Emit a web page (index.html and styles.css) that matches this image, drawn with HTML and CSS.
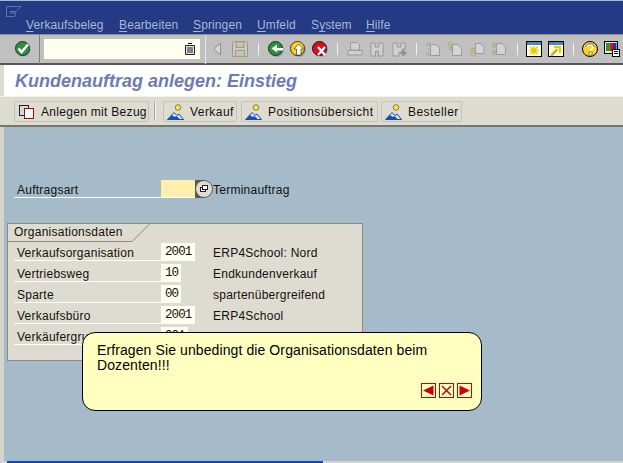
FILE: index.html
```html
<!DOCTYPE html>
<html lang="de">
<head>
<meta charset="utf-8">
<title>Kundenauftrag anlegen: Einstieg</title>
<link rel="stylesheet" href="styles.css">
</head>
<body>
<div class="window">
  <header class="menubar">
    <svg class="sysicon" width="16" height="11" viewBox="0 0 16 11"><path d="M.5.5H15L10 5.500H4.500M.5.5V10.500H8.500L10 7H4.500V5.500" fill="none" stroke="#5f73ad"/></svg>
    <nav class="menu">
      <span class="mi m1"><u>V</u>erkaufsbeleg</span>
      <span class="mi m2"><u>B</u>earbeiten</span>
      <span class="mi m3"><u>S</u>pringen</span>
      <span class="mi m4"><u>U</u>mfeld</span>
      <span class="mi m5">S<u>y</u>stem</span>
      <span class="mi m6"><u>H</u>ilfe</span>
    </nav>
  </header>

  <div class="toolbar">
    <svg class="ic first" viewBox="0 0 16 16"><circle cx="8.500" cy="8.500" r="7" fill="#8d8db5"/><circle cx="7.500" cy="7.500" r="7" fill="#2f8f3c" stroke="#1c3a20"/><path d="M3.500 7.500L6.500 11 13 3.500" fill="none" stroke="#fff" stroke-width="2.500"/></svg>
    <span class="vsep s1"></span>
    <div class="cmd"><svg class="cmdic" width="10" height="12" viewBox="0 0 10 12"><path d="M3 0H7V1H3z" fill="#000"/><path d="M.5 2.500H9.500V11.500H.5z" fill="#e4e4e4" stroke="#222"/><path d="M2 5H8M2 7H8M2 9H8" stroke="#222"/></svg></div>
    <span class="vsep s2"></span>
    <svg class="ic narrow" viewBox="0 0 9 16"><path d="M7.500 2V14L1 8z" fill="#d8d8d8" stroke="#8f8f8f"/></svg>
    <svg class="ic g11" viewBox="0 0 16 16"><rect x=".5" y=".5" width="15" height="15" rx="1" fill="#c8c8c8" stroke="#999"/><rect x="4" y="1" width="8" height="5.500" fill="#c0c0c0" stroke="#b89a55"/><rect x="3.500" y="9.500" width="9" height="6" fill="#c0c0c0" stroke="#b89a55"/></svg>
    <span class="vsep s3"></span>
    <svg class="ic g9" viewBox="0 0 16 16"><circle cx="8.800" cy="8.800" r="7" fill="#8d8db5"/><circle cx="7.500" cy="7.500" r="7" fill="#2f8f3c" stroke="#16331c"/><path d="M15 7H9V3.500L3.500 7.500 9 11.500V9.500H15z" fill="#fff"/></svg>
    <svg class="ic g6" viewBox="0 0 16 16"><circle cx="8.800" cy="8.800" r="7" fill="#8d8db5"/><circle cx="7.500" cy="7.500" r="7" fill="#f7d51d" stroke="#4a3a00"/><path d="M8.500 3L4 8H6.500V14H11V8H13.500z" fill="#fff" stroke="#222" stroke-width=".6"/></svg>
    <svg class="ic g6" viewBox="0 0 16 16"><circle cx="8.800" cy="8.800" r="7" fill="#8d8db5"/><circle cx="7.500" cy="7.500" r="7" fill="#d40f1e" stroke="#3d0508"/><path d="M6 6L13 14M13 6L6 14" stroke="#fff" stroke-width="2.200"/></svg>
    <span class="vsep s4"></span>
    <svg class="ic g9 off" viewBox="0 0 16 16"><path d="M3.500 1.500H10L12.500 4V9H3.500z" fill="#d0d0d0" stroke="#9a9a9a"/><path d="M1 9.500H15V14H1z" fill="#d0d0d0" stroke="#9a9a9a"/></svg>
    <svg class="ic g6 off" viewBox="0 0 16 16"><path d="M2 2H6V6H10V2H14V15H9.500V10H6.500V15H2z" fill="#d0d0d0" stroke="#9a9a9a"/></svg>
    <svg class="ic g6 off" viewBox="0 0 16 16"><path d="M2 2H6V6H10V2H14V8H11V11H8V15H2z" fill="#d0d0d0" stroke="#9a9a9a"/><path d="M12.500 9V15M9.500 12H15.500" stroke="#8d8d8d" stroke-width="2"/></svg>
    <span class="vsep s5"></span>
    <svg class="ic g8 off" viewBox="0 0 16 16"><path d="M5.500 3.500H11L14.500 7V14.500H5.500z" fill="#d4d4d4" stroke="#9a9a9a"/><path d="M3.500 1L1 4H6zM3.500 7V9M3.500 15L1 12H6z" fill="#c8c87e" stroke="#9a9a7a" stroke-width=".6"/></svg>
    <svg class="ic g6 off" viewBox="0 0 16 16"><path d="M5.500 3.500H11L14.500 7V14.500H5.500z" fill="#d4d4d4" stroke="#9a9a9a"/><path d="M3.500 .5L.5 4H2.500V9H4.500V4H6.500z" fill="#c8c87e" stroke="#9a9a7a" stroke-width=".6"/></svg>
    <svg class="ic g6 off" viewBox="0 0 16 16"><path d="M6.500 2.500H12L15 6V12.500H6.500z" fill="#d4d4d4" stroke="#9a9a9a"/><path d="M4 15.500L1 12H3V7H5V12H7z" fill="#c8c87e" stroke="#9a9a7a" stroke-width=".6"/></svg>
    <svg class="ic g6 off" viewBox="0 0 16 16"><path d="M5.500 2.500H11L14.500 6V13.500H5.500z" fill="#d4d4d4" stroke="#9a9a9a"/><path d="M3.500 7L1 4H6zM3.500 1V3M3.500 9L1 12H6zM3.500 13V15" fill="#c8c87e" stroke="#9a9a7a" stroke-width=".7"/></svg>
    <span class="vsep s6"></span>
    <svg class="ic g8" viewBox="0 0 16 16"><rect x=".5" y=".5" width="15" height="15" fill="#ffffd8" stroke="#000"/><rect x="1" y="1" width="14" height="3" fill="#4f86c6"/><path d="M8 5V14M3.500 9.500H12.500M4.500 6L11.500 13M11.500 6L4.500 13" stroke="#e8c800" stroke-width="1.300"/></svg>
    <svg class="ic g6" viewBox="0 0 16 16"><rect x=".5" y=".5" width="15" height="15" fill="#ffffd8" stroke="#000"/><rect x="1" y="1" width="14" height="3" fill="#4f86c6"/><path d="M3 14L9 8M6 6H12V12" fill="none" stroke="#e8c800" stroke-width="2"/><path d="M3.500 15L10 8.500" stroke="#222" stroke-width=".6"/></svg>
    <span class="vsep s7"></span>
    <svg class="ic g8" viewBox="0 0 16 16"><circle cx="8" cy="8" r="7.500" fill="#ffd21f" stroke="#000"/><path d="M5 6C5 2.500 11 2.500 11 6C11 8 8.500 8 8.500 10" fill="none" stroke="#fff" stroke-width="2"/><path d="M4 6C4 2 12 1.500 12 6" fill="none" stroke="#3a2a00" stroke-width=".7"/><rect x="7" y="11" width="3" height="3" fill="#fff" stroke="#222" stroke-width=".5"/></svg>
    <svg class="ic g6" viewBox="0 0 16 16"><rect x=".5" y=".5" width="13" height="12" fill="#eee" stroke="#000"/><rect x="2" y="2" width="3.500" height="8" fill="#18a018"/><rect x="5.500" y="2" width="3.500" height="8" fill="#d01818"/><rect x="9" y="2" width="3.500" height="8" fill="#2030c0"/><rect x="8.500" y="8.500" width="7" height="7" fill="#fff" stroke="#000"/><path d="M10 10.500H14M10 12.500H14" stroke="#000"/></svg>
  </div>

  <h1 class="title">Kundenauftrag anlegen: Einstieg</h1>

  <div class="apptools">
    <button class="btn b1"><svg width="16" height="14" viewBox="0 0 16 14"><rect x=".5" y=".5" width="9" height="10" fill="#d8d8d8" stroke="#222"/><rect x="5.500" y="3.500" width="9" height="10" fill="#eef3fb" stroke="#8a1010"/></svg><span class="b1t">Anlegen mit Bezug</span></button>
    <span class="asep"></span>
    <button class="btn b2"><svg class="pic" width="17" height="16" viewBox="0 0 17 16"><circle cx="11" cy="3.500" r="2.800" fill="#ffe23a" stroke="#555" stroke-width=".7"/><path d="M.5 15.500L7 8.500 10 11.500 12 10 16.500 15.500z" fill="#cfe4f7" stroke="#1c4ea8"/><path d="M1 15.500L5 11 7.500 13 9.500 12 13 15.500z" fill="#1c4ea8"/></svg><span>Verkauf</span></button>
    <button class="btn b3"><svg class="pic" width="17" height="16" viewBox="0 0 17 16"><circle cx="11" cy="3.500" r="2.800" fill="#ffe23a" stroke="#555" stroke-width=".7"/><path d="M.5 15.500L7 8.500 10 11.500 12 10 16.500 15.500z" fill="#cfe4f7" stroke="#1c4ea8"/><path d="M1 15.500L5 11 7.500 13 9.500 12 13 15.500z" fill="#1c4ea8"/></svg><span>Positionsübersicht</span></button>
    <button class="btn b4"><svg class="pic" width="17" height="16" viewBox="0 0 17 16"><circle cx="11" cy="3.500" r="2.800" fill="#ffe23a" stroke="#555" stroke-width=".7"/><path d="M.5 15.500L7 8.500 10 11.500 12 10 16.500 15.500z" fill="#cfe4f7" stroke="#1c4ea8"/><path d="M1 15.500L5 11 7.500 13 9.500 12 13 15.500z" fill="#1c4ea8"/></svg><span>Besteller</span></button>
  </div>

  <main class="content">
    <div class="field top">
      <label class="lbl">Auftragsart</label>
      <span class="inp req w4"></span>
      <span class="f4"><svg width="18" height="18" viewBox="0 0 18 18"><path d="M0 0H9A9 9 0 0 1 9 18H0z" fill="#5a5a54"/><circle cx="9" cy="9" r="8" fill="#dedcd0"/><rect x="5.500" y="7.500" width="5" height="4" fill="#fff" stroke="#222"/><rect x="7.500" y="5.500" width="5" height="4" fill="#fff" stroke="#222"/></svg></span>
      <span class="after">Terminauftrag</span>
    </div>

    <section class="group">
      <div class="grouphead">
        <span class="tab">Organisationsdaten</span>
        <svg class="tabcut" width="18" height="18" viewBox="0 0 18 18"><path d="M0 17.500L17.500 0" stroke="#8c8b80" fill="none"/></svg>
      </div>
      <div class="rows">
        <div class="field"><label class="lbl">Verkaufsorganisation</label><span class="inp w4">2001</span><span class="desc">ERP4School: Nord</span></div>
        <div class="field"><label class="lbl">Vertriebsweg</label><span class="inp w2">10</span><span class="desc d2">Endkundenverkauf</span></div>
        <div class="field"><label class="lbl">Sparte</label><span class="inp w2">00</span><span class="desc d2">spartenübergreifend</span></div>
        <div class="field"><label class="lbl">Verkaufsbüro</label><span class="inp w4">2001</span><span class="desc">ERP4School</span></div>
        <div class="field"><label class="lbl">Verkäufergruppe</label><span class="inp w3">001</span></div>
      </div>
    </section>
  </main>

  <div class="statusbar"><span class="taskblue"></span></div>

  <aside class="bubble">
    <p class="bubbletext">Erfragen Sie unbedingt die Organisationsdaten beim Dozenten!!!</p>
    <div class="bubblenav">
      <span class="nb"><svg width="13" height="13" viewBox="0 0 13 13"><path d="M1 6.500L11.500 1.500V11.500z" fill="#d00000"/></svg></span>
      <span class="nb"><svg width="13" height="13" viewBox="0 0 13 13"><path d="M2 2L11 11M11 2L2 11" stroke="#d00000" stroke-width="1.500"/></svg></span>
      <span class="nb"><svg width="13" height="13" viewBox="0 0 13 13"><path d="M12 6.500L1.500 1.500V11.500z" fill="#d00000"/></svg></span>
    </div>
  </aside>
</div>
</body>
</html>
```

FILE: styles.css
```css
* { box-sizing: border-box; }
html, body { margin: 0; padding: 0; }
body { width: 623px; height: 463px; overflow: hidden; background: #a5bbca; font-family: "Liberation Sans", Arial, sans-serif; font-size: 12px; color: #111; }
.window { position: relative; width: 623px; height: 463px; display: flex; flex-direction: column; }

.menubar { height: 33px; margin-top: 1px; background: #243a82; padding: 5px 0 0 6px; flex: none; }
.sysicon { display: block; }
.menu { display: flex; margin-top: 1px; padding-left: 20px; color: #aab6d8; letter-spacing: .12px; line-height: 14px; }
.menu u { text-underline-offset: 2px; }
.mi { white-space: nowrap; }
.m1 { width: 93px; }
.m2 { width: 74px; }
.m3 { width: 64px; }
.m4 { width: 54px; }
.m5 { width: 55px; }

.toolbar { height: 31px; flex: none; background: #c0c0c0; border-top: 1px solid #8f8f8f; border-bottom: 2px solid #555; display: flex; align-items: center; }
.ic { width: 16px; height: 16px; flex: none; display: block; }
.first { margin-left: 15px; }
.narrow { width: 9px; margin-left: 7px; }
.g6 { margin-left: 6px; }
.g8 { margin-left: 8px; }
.g9 { margin-left: 9px; }
.g11 { margin-left: 10px; }
.vsep { width: 1px; height: 12px; background: #f2f2f2; flex: none; }
.s1 { height: 29px; background: #808080; margin-left: 8px; }
.s2 { height: 29px; background: #e4e4e4; margin-left: 5px; }
.s3 { margin-left: 10px; }
.s4 { margin-left: 9px; }
.s5 { margin-left: 9px; }
.s6 { margin-left: 10px; }
.s7 { margin-left: 9px; }
.cmd { width: 156px; height: 20px; margin-left: 4px; background: #fffff0; display: flex; align-items: center; justify-content: flex-end; padding-right: 5px; }
.cmdic { display: block; }

.title { margin: 0; height: 31px; flex: none; background: #fff; border-left: 4px solid #dedcd0; padding-left: 11px; font-size: 18px; font-style: italic; font-weight: bold; line-height: 32px; color: #6e7bb4; }

.apptools { height: 31px; flex: none; background: #dedcd0; border-top: 1px solid #f2f1ea; border-bottom: 2px solid #77776d; padding: 4px 0 0 14px; display: flex; align-items: flex-start; }
.btn { height: 21px; padding: 0 0 0 4px; margin: 0; background: #dedcd0; border: 1px solid #c4c3b8; border-radius: 2px; font: inherit; letter-spacing: .45px; color: #111; display: flex; align-items: center; white-space: nowrap; }
.b1 { width: 135px; }
.b1t { margin-left: 6px; letter-spacing: .3px; }
.b2 { width: 74px; margin-right: 4px; padding-left: 3px; }
.b3 { width: 137px; margin-right: 3px; padding-left: 3px; }
.b4 { width: 81px; padding-left: 3px; }
.pic { margin-right: 6px; flex: none; }
.asep { width: 2px; height: 20px; background: #aaa99e; margin: 0 7px 0 5px; flex: none; border-right: 1px solid #f5f4ee; }

.content { flex: 1; border-left: 4px solid #d6d5cb; padding: 53px 0 0 0; }
.field { display: flex; height: 18px; align-items: stretch; line-height: 20px; letter-spacing: .25px; }
.top { margin-left: 10px; }
.lbl { width: 147px; padding-left: 3px; border-bottom: 1px solid #fff; flex: none; white-space: nowrap; line-height: 20px; }
.inp { background: #fffff0; font-family: "Liberation Mono", monospace; font-size: 12.500px; letter-spacing: -.9px; padding-left: 4px; line-height: 19px; flex: none; }
.req { background: #fdf0ac; border-bottom: 1px solid #fff; }
.w4 { width: 34px; }
.w3 { width: 27px; }
.w2 { width: 20px; }
.f4 { width: 18px; height: 18px; flex: none; }
.f4 svg { display: block; }
.desc { margin-left: 18px; white-space: nowrap; }
.d2 { margin-left: 32px; }

.group { width: 356px; height: 138px; margin: 25px 0 0 3px; background: #dedcd0; border: 1px solid #8c8b80; }
.grouphead { display: flex; height: 18px; align-items: stretch; }
.tab { width: 124px; padding-left: 6px; border-bottom: 1px solid #8c8b80; background: #dedcd0; line-height: 16px; letter-spacing: .25px; white-space: nowrap; }
.tabcut { display: block; flex: none; }
.rows { display: flex; flex-direction: column; gap: 3px; padding: 1px 0 0 6px; }

.statusbar { height: 2px; flex: none; background: #d4d4d4; padding-left: 7px; }
.taskblue { display: block; width: 316px; height: 2px; background: #1a44b0; }

.bubble { position: absolute; left: 82px; top: 332px; width: 400px; height: 79px; background: #ffffc0; border: 1px solid #000; border-radius: 13px; padding: 10px 14px 0 14px; }
.bubbletext { margin: 0; font-size: 14px; letter-spacing: .1px; line-height: 14.500px; color: #000; }
.bubblenav { position: absolute; right: 9px; bottom: 12px; display: flex; gap: 3px; }
.nb { width: 15px; height: 15px; border: 1px solid #d00000; display: block; }
.nb svg { display: block; width: 13px; height: 13px; }
```
